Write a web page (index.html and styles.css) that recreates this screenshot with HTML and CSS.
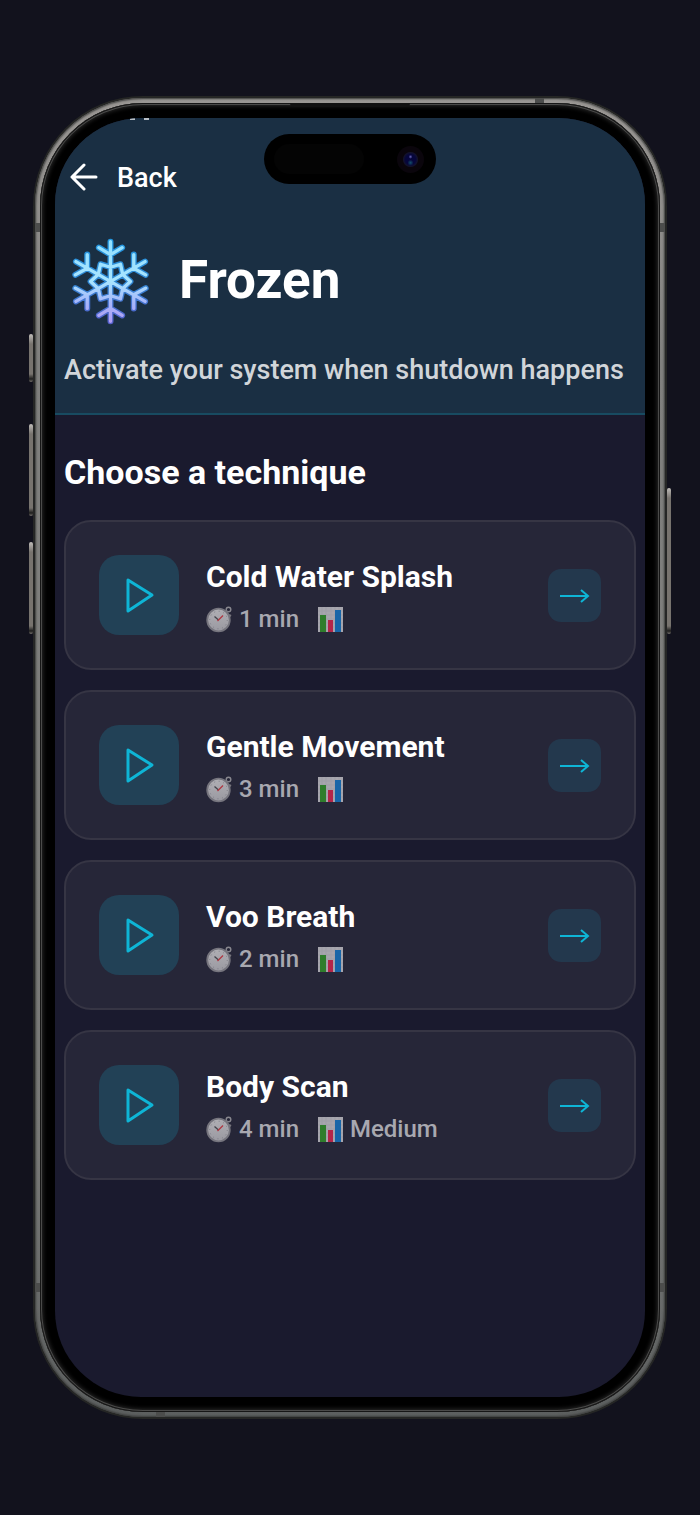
FILE: index.html
```
<!DOCTYPE html>
<html lang="en">
  <head>
    <meta charset="UTF-8" />
    <meta name="viewport" content="width=device-width, initial-scale=1.0" />
    <title>Frozen</title>
    <link rel="stylesheet" href="styles.css">
  </head>
  <body>
    <!-- Shared icons -->
    <svg class="sprite" aria-hidden="true">
      <defs>
        <linearGradient id="dial" x1="0" y1="0" x2="0" y2="1">
          <stop offset="0" stop-color="#b0afb4" />
          <stop offset="1" stop-color="#9a99a1" />
        </linearGradient>
        <symbol id="play" viewBox="0 0 32 38">
          <path d="M5 4v31l24-16z" fill="none" stroke="#0eb5d6" stroke-width="3" stroke-linejoin="round" />
        </symbol>
        <symbol id="arrow" viewBox="0 0 32 16">
          <path d="M1 9h28M22 3l7 6-7 6" fill="none" stroke="#0eb5d6" stroke-width="2" />
        </symbol>
        <symbol id="watch" viewBox="0 0 27 27">
          <circle cx="22.5" cy="3.5" r="2.3" fill="none" stroke="#88878e" stroke-width="1.4" />
          <path d="M19 7l2-2M23 9l2 1" stroke="#77767d" stroke-width="2" />
          <circle cx="12.5" cy="14" r="11.3" fill="url(#dial)" stroke="#76757e" stroke-width="1.8" />
          <circle cx="12.5" cy="14" r="8.8" fill="none" stroke="#7c7b84" stroke-width="1" stroke-dasharray="1 3.6" />
          <path d="M12.5 14L8.5 10.500" stroke="#44434b" stroke-width="1.3" />
          <path d="M11.500 15l5.500-5.500" stroke="#b03640" stroke-width="1.3" />
        </symbol>
        <symbol id="chart" viewBox="0 0 27 27">
          <rect x="1" y="1" width="25" height="25" fill="#a7a6ae" />
          <path d="M1 5h25M1 9h25M1 13h25M1 17h25M1 21h25M5 1v25M9 1v25M14 1v25M18 1v25M22 1v25" stroke="#9f9ea7" />
          <rect x="3" y="9" width="6" height="17" fill="#2f7d2c" />
          <rect x="11" y="14" width="5" height="12" fill="#b52548" />
          <rect x="18" y="4" width="6" height="22" fill="#1765a8" />
        </symbol>
      </defs>
    </svg>

    <div class="phone">
      <span class="side-button action"></span>
      <span class="side-button volume-up"></span>
      <span class="side-button volume-down"></span>
      <span class="side-button power"></span>
      <div class="rail">
        <span class="band band-top"></span>
        <span class="band band-left"></span>
        <span class="band band-right"></span>
        <span class="band band-left-low"></span>
        <span class="band band-right-low"></span>
        <span class="band band-bottom"></span>
        <div class="bezel">
          <span class="speaker"></span>
          <div class="screen">
            <div class="status-marks"></div>
            <div class="island">
              <span class="sensor"></span>
              <span class="camera"></span>
            </div>

            <header class="header">
              <button class="back-button" type="button">
                <svg width="30" height="30" viewBox="0 0 30 30" fill="none" stroke="#fff" stroke-width="3" stroke-linecap="round" stroke-linejoin="round" aria-hidden="true">
                  <path d="M27 14H3M15 2L3 14l12 12" />
                </svg>
                Back
              </button>
              <div class="title-row">
                <svg class="snowflake" viewBox="-140 -140 280 280" aria-hidden="true">
                  <defs>
                    <linearGradient id="ice" gradientUnits="userSpaceOnUse" x1="0" y1="-130" x2="0" y2="130">
                      <stop offset="0" stop-color="#8fe0ff" />
                      <stop offset="0.5" stop-color="#a9e4ff" />
                      <stop offset="0.75" stop-color="#a7b5fa" />
                      <stop offset="1" stop-color="#b39bf0" />
                    </linearGradient>
                    <linearGradient id="edge" gradientUnits="userSpaceOnUse" x1="0" y1="-130" x2="0" y2="130">
                      <stop offset="0" stop-color="#2398e0" />
                      <stop offset="0.5" stop-color="#2f86d2" />
                      <stop offset="1" stop-color="#5960cc" />
                    </linearGradient>
                    <path id="flake" stroke-linecap="round" stroke-linejoin="round" fill="none" d="M0-120V120M-104-60L104 60M-104 60L104-60
                      M-35-102L0-81L35-102M-35 102L0 81L35 102
                      M-70-81V-40L-106-20M70-81V-40L106-20
                      M-70 81V40L-106 20M70 81V40L106 20
                      M0-43L30-52L37-21L60 0L37 21L30 52L0 43L-30 52L-37 21L-60 0L-37-21L-30-52Z" />
                  </defs>
                  <use href="#flake" stroke="url(#edge)" stroke-width="18" />
                  <use href="#flake" stroke="url(#ice)" stroke-width="10" />
                </svg>
                <h1>Frozen</h1>
              </div>
              <p class="subtitle">Activate your system when shutdown happens</p>
            </header>

            <main class="content">
              <h2>Choose a technique</h2>
              <ul class="technique-list">
                <li class="card">
                  <button class="play-button" type="button" aria-label="Play Cold Water Splash"><svg><use href="#play" /></svg></button>
                  <div class="info">
                    <h3>Cold Water Splash</h3>
                    <div class="meta">
                      <span><svg><use href="#watch" /></svg>1 min</span>
                      <span><svg><use href="#chart" /></svg></span>
                    </div>
                  </div>
                  <button class="open-button" type="button" aria-label="Open Cold Water Splash"><svg><use href="#arrow" /></svg></button>
                </li>
                <li class="card">
                  <button class="play-button" type="button" aria-label="Play Gentle Movement"><svg><use href="#play" /></svg></button>
                  <div class="info">
                    <h3>Gentle Movement</h3>
                    <div class="meta">
                      <span><svg><use href="#watch" /></svg>3 min</span>
                      <span><svg><use href="#chart" /></svg></span>
                    </div>
                  </div>
                  <button class="open-button" type="button" aria-label="Open Gentle Movement"><svg><use href="#arrow" /></svg></button>
                </li>
                <li class="card">
                  <button class="play-button" type="button" aria-label="Play Voo Breath"><svg><use href="#play" /></svg></button>
                  <div class="info">
                    <h3>Voo Breath</h3>
                    <div class="meta">
                      <span><svg><use href="#watch" /></svg>2 min</span>
                      <span><svg><use href="#chart" /></svg></span>
                    </div>
                  </div>
                  <button class="open-button" type="button" aria-label="Open Voo Breath"><svg><use href="#arrow" /></svg></button>
                </li>
                <li class="card">
                  <button class="play-button" type="button" aria-label="Play Body Scan"><svg><use href="#play" /></svg></button>
                  <div class="info">
                    <h3>Body Scan</h3>
                    <div class="meta">
                      <span><svg><use href="#watch" /></svg>4 min</span>
                      <span><svg><use href="#chart" /></svg>Medium</span>
                    </div>
                  </div>
                  <button class="open-button" type="button" aria-label="Open Body Scan"><svg><use href="#arrow" /></svg></button>
                </li>
              </ul>
            </main>
          </div>
        </div>
      </div>
    </div>
  </body>
</html>
```
FILE: styles.css
```
* {
  box-sizing: border-box;
}
body {
  font-family: Roboto, Arial, sans-serif;
  background-color: #12121d;
  color: #fff;
  margin: 0;
  padding: 96px 33px;
  min-height: 100vh;
  display: flex;
}
h1,
h2,
h3,
p,
ul {
  margin: 0;
  padding: 0;
}
button {
  border: none;
  padding: 0;
  color: inherit;
  font-family: inherit;
  cursor: pointer;
}
.sprite {
  position: absolute;
  width: 0;
  height: 0;
}

/* Device frame */
.phone {
  position: relative;
  flex: 1;
  display: flex;
  padding: 2px;
  border-radius: 110px;
  background: #252625;
}
.rail {
  position: relative;
  flex: 1;
  display: flex;
  padding: 5px;
  border-radius: 108px;
  background: linear-gradient(#9a9794, #80807e 20%, #787977 80%, #5c5f5f);
  box-shadow: inset 0 0 2px 1px #3c3d3c;
}
.bezel {
  position: relative;
  flex: 1;
  display: flex;
  padding: 15px;
  border-radius: 103px;
  background: #000;
  box-shadow: inset 0 0 0 1px #161616, inset 0 0 0 2px #4a4a49, inset 0 0 4px 3px #292929;
}
.side-button {
  position: absolute;
  width: 4px;
  border-radius: 2px;
  background: linear-gradient(#c0bdb9, #77736e 10px, #77736e calc(100% - 8px), #1d1d1c calc(100% - 3px), #77736e);
}
.action {
  left: -4px;
  top: 238px;
  height: 48px;
}
.volume-up {
  left: -4px;
  top: 328px;
  height: 92px;
}
.volume-down {
  left: -4px;
  top: 446px;
  height: 92px;
}
.power {
  right: -4px;
  top: 392px;
  height: 146px;
}
.band {
  position: absolute;
  width: 5px;
  height: 9px;
  background: #4c4d4c;
}
.band-top,
.band-bottom {
  width: 9px;
  height: 5px;
}
.band-top {
  top: 0;
  right: 121px;
}
.band-bottom {
  bottom: 0;
  left: 121px;
}
.band-left,
.band-left-low {
  left: 0;
}
.band-right,
.band-right-low {
  right: 0;
}
.band-left,
.band-right {
  top: 125px;
}
.band-left-low,
.band-right-low {
  bottom: 125px;
}
.speaker {
  position: absolute;
  top: 0;
  left: 50%;
  width: 120px;
  height: 4px;
  transform: translateX(-50%);
  border-radius: 0 0 4px 4px;
  background: #111;
}

/* Screen */
.screen {
  position: relative;
  flex: 1;
  overflow: hidden;
  border-radius: 86px;
  background: #1a1a2e;
}
.status-marks {
  position: absolute;
  top: 0;
  left: 75px;
  width: 20px;
  height: 2px;
  background: linear-gradient(90deg, #b9c0c7 5px, transparent 5px 14px, #b9c0c7 14px 19px, transparent 19px);
}
.island {
  position: absolute;
  top: 16px;
  left: 50%;
  transform: translateX(-50%);
  display: flex;
  align-items: center;
  justify-content: space-between;
  width: 172px;
  height: 50px;
  padding: 0 12px 0 10px;
  border-radius: 25px;
  background: #000;
}
.sensor {
  width: 90px;
  height: 30px;
  border-radius: 15px;
  background: #040404;
}
.camera {
  width: 27px;
  height: 27px;
  border-radius: 50%;
  background:
    radial-gradient(circle at 50% 40%, #6865b8 0, transparent 2px),
    radial-gradient(circle at 50% 62%, #12506b 0, transparent 3px),
    radial-gradient(circle, #06063c 0 5px, #13122c 7px, #0a050c 8px);
}
.header {
  padding: 44px 9px 27px;
  background: #1a2f43;
  border-bottom: 2px solid #184b61;
}
.back-button {
  display: flex;
  align-items: center;
  gap: 18px;
  padding-left: 5px;
  background: none;
  font-size: 27px;
  font-weight: 500;
  line-height: 32px;
}
.title-row {
  display: flex;
  align-items: center;
  gap: 22px;
  margin: 41px 0 26px;
}
.snowflake {
  width: 93px;
  height: 93px;
}
h1 {
  padding-bottom: 4px;
  font-size: 53px;
  line-height: 64px;
}
.subtitle {
  color: #d1d5d9;
  font-size: 27px;
  font-weight: 500;
  line-height: 32px;
}
.content {
  padding: 37px 9px;
}
h2 {
  font-size: 34px;
  line-height: 40px;
}
.technique-list {
  display: flex;
  flex-direction: column;
  gap: 20px;
  margin-top: 28px;
  list-style: none;
}
.card {
  display: flex;
  align-items: center;
  gap: 27px;
  padding: 33px;
  border: 2px solid #363544;
  border-radius: 27px;
  background: #262638;
}
.play-button,
.open-button {
  display: flex;
  align-items: center;
  justify-content: center;
  flex: none;
}
.play-button {
  width: 80px;
  height: 80px;
  border-radius: 20px;
  background: #224156;
}
.play-button svg {
  width: 32px;
  height: 38px;
}
.open-button {
  width: 53px;
  height: 53px;
  border-radius: 13px;
  background: #23384d;
}
.open-button svg {
  width: 32px;
  height: 16px;
}
.info {
  flex: 1;
  padding-top: 2px;
}
h3 {
  font-size: 30px;
  line-height: 40px;
}
.meta {
  display: flex;
  gap: 18px;
  margin-top: 6px;
  color: #a8a8b0;
  font-size: 24px;
  font-weight: 500;
  line-height: 32px;
}
.meta span {
  display: flex;
  align-items: center;
  gap: 6px;
}
.meta svg {
  width: 27px;
  height: 27px;
}
```
